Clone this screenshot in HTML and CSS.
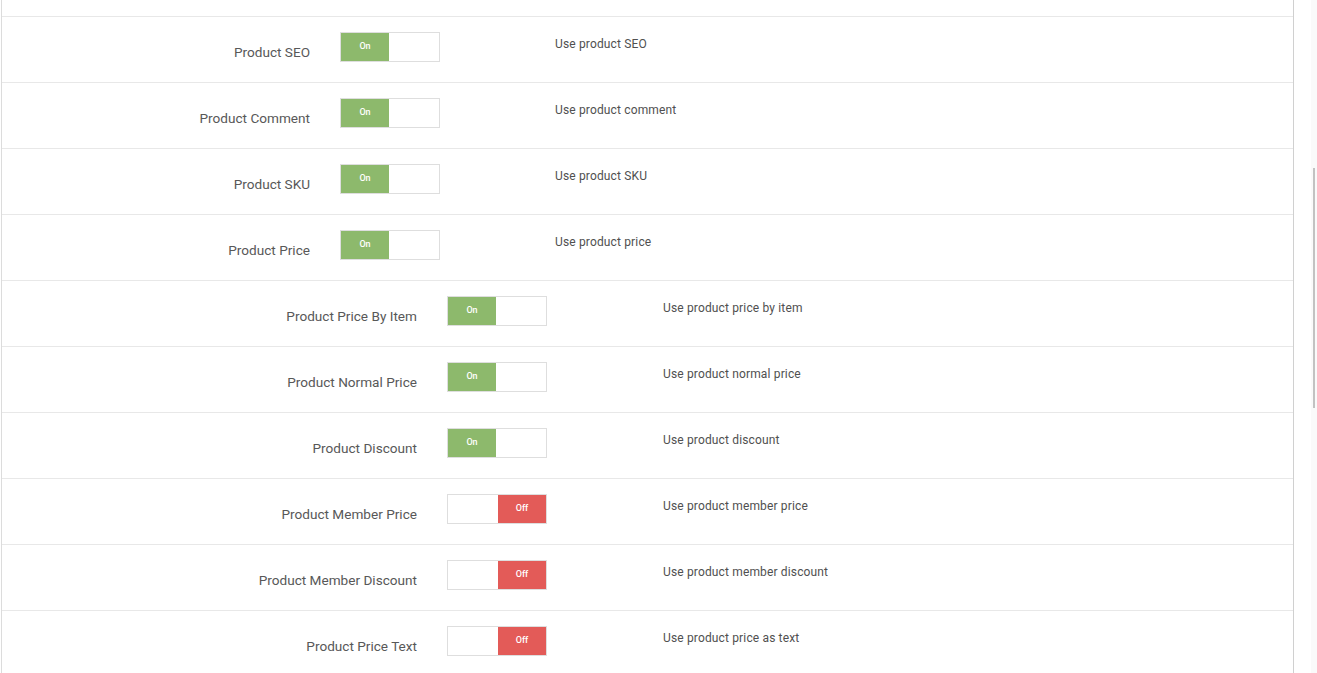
FILE: index.html
```html
<!DOCTYPE html>
<html>
<head>
<meta charset="utf-8">
<link rel="stylesheet" href="styles.css">
</head>
<body>
<div class="panel">
  <div class="top-spacer"></div>
  <div class="row g1"><div class="label">Product SEO</div><div class="toggle on"><span class="half green">On</span><span class="half blank"></span></div><div class="desc">Use product SEO</div></div>
  <div class="row g1"><div class="label">Product Comment</div><div class="toggle on"><span class="half green">On</span><span class="half blank"></span></div><div class="desc">Use product comment</div></div>
  <div class="row g1"><div class="label">Product SKU</div><div class="toggle on"><span class="half green">On</span><span class="half blank"></span></div><div class="desc">Use product SKU</div></div>
  <div class="row g1"><div class="label">Product Price</div><div class="toggle on"><span class="half green">On</span><span class="half blank"></span></div><div class="desc">Use product price</div></div>
  <div class="row g2"><div class="label">Product Price By Item</div><div class="toggle on"><span class="half green">On</span><span class="half blank"></span></div><div class="desc">Use product price by item</div></div>
  <div class="row g2"><div class="label">Product Normal Price</div><div class="toggle on"><span class="half green">On</span><span class="half blank"></span></div><div class="desc">Use product normal price</div></div>
  <div class="row g2"><div class="label">Product Discount</div><div class="toggle on"><span class="half green">On</span><span class="half blank"></span></div><div class="desc">Use product discount</div></div>
  <div class="row g2"><div class="label">Product Member Price</div><div class="toggle off"><span class="half blank"></span><span class="half red">Off</span></div><div class="desc">Use product member price</div></div>
  <div class="row g2"><div class="label">Product Member Discount</div><div class="toggle off"><span class="half blank"></span><span class="half red">Off</span></div><div class="desc">Use product member discount</div></div>
  <div class="row g2"><div class="label">Product Price Text</div><div class="toggle off"><span class="half blank"></span><span class="half red">Off</span></div><div class="desc">Use product price as text</div></div>
</div>
<div class="scrollbar"><div class="thumb"></div></div>
</body>
</html>
```

FILE: styles.css
```css
html, body {
  margin: 0;
  padding: 0;
  background: #fff;
  overflow: hidden;
  height: 673px;
}
body {
  font-family: Roboto, "Liberation Sans", Arial, sans-serif;
  color: #555;
}
.panel {
  margin-left: 1px;
  width: 1293px;
  border-left: 1px solid #dcdcdc;
  border-right: 1px solid #d0d0d0;
  min-height: 673px;
  box-sizing: border-box;
}
.top-spacer {
  height: 16px;
}
.row {
  display: flex;
  align-items: flex-start;
  height: 65px;
  border-top: 1px solid #e8e8e8;
}
.label {
  font-size: 13.6px;
  line-height: 20px;
  color: #585858;
  text-align: right;
  padding-top: 25px;
  box-sizing: border-box;
}
.g1 .label { width: 308px; }
.g2 .label { width: 415px; }
.toggle {
  margin-left: 30px;
  margin-top: 15px;
  width: 100px;
  height: 30px;
  box-sizing: border-box;
  border: 1px solid #dedede;
  display: flex;
  flex-shrink: 0;
}
.half {
  width: 49px;
  height: 28px;
  display: block;
  font-size: 9px;
  font-weight: 500;
  color: #fff;
  text-align: center;
  line-height: 27px;
}
.green { background: #8db96c; width: 48px; }
.red { background: #e35b58; width: 48px; }
.blank { background: #fff; width: 50px; }
.desc {
  font-size: 12px;
  line-height: 16px;
  letter-spacing: 0.15px;
  color: #505050;
  margin-top: 19px;
}
.g1 .desc { margin-left: 115px; }
.g2 .desc { margin-left: 116px; }
.scrollbar {
  position: fixed;
  top: 0;
  right: 0;
  width: 6px;
  height: 673px;
  background: #fafafa;
}
.thumb {
  position: absolute;
  left: 2px;
  top: 168px;
  width: 2px;
  height: 240px;
  background: #c2c2c2;
}
```
